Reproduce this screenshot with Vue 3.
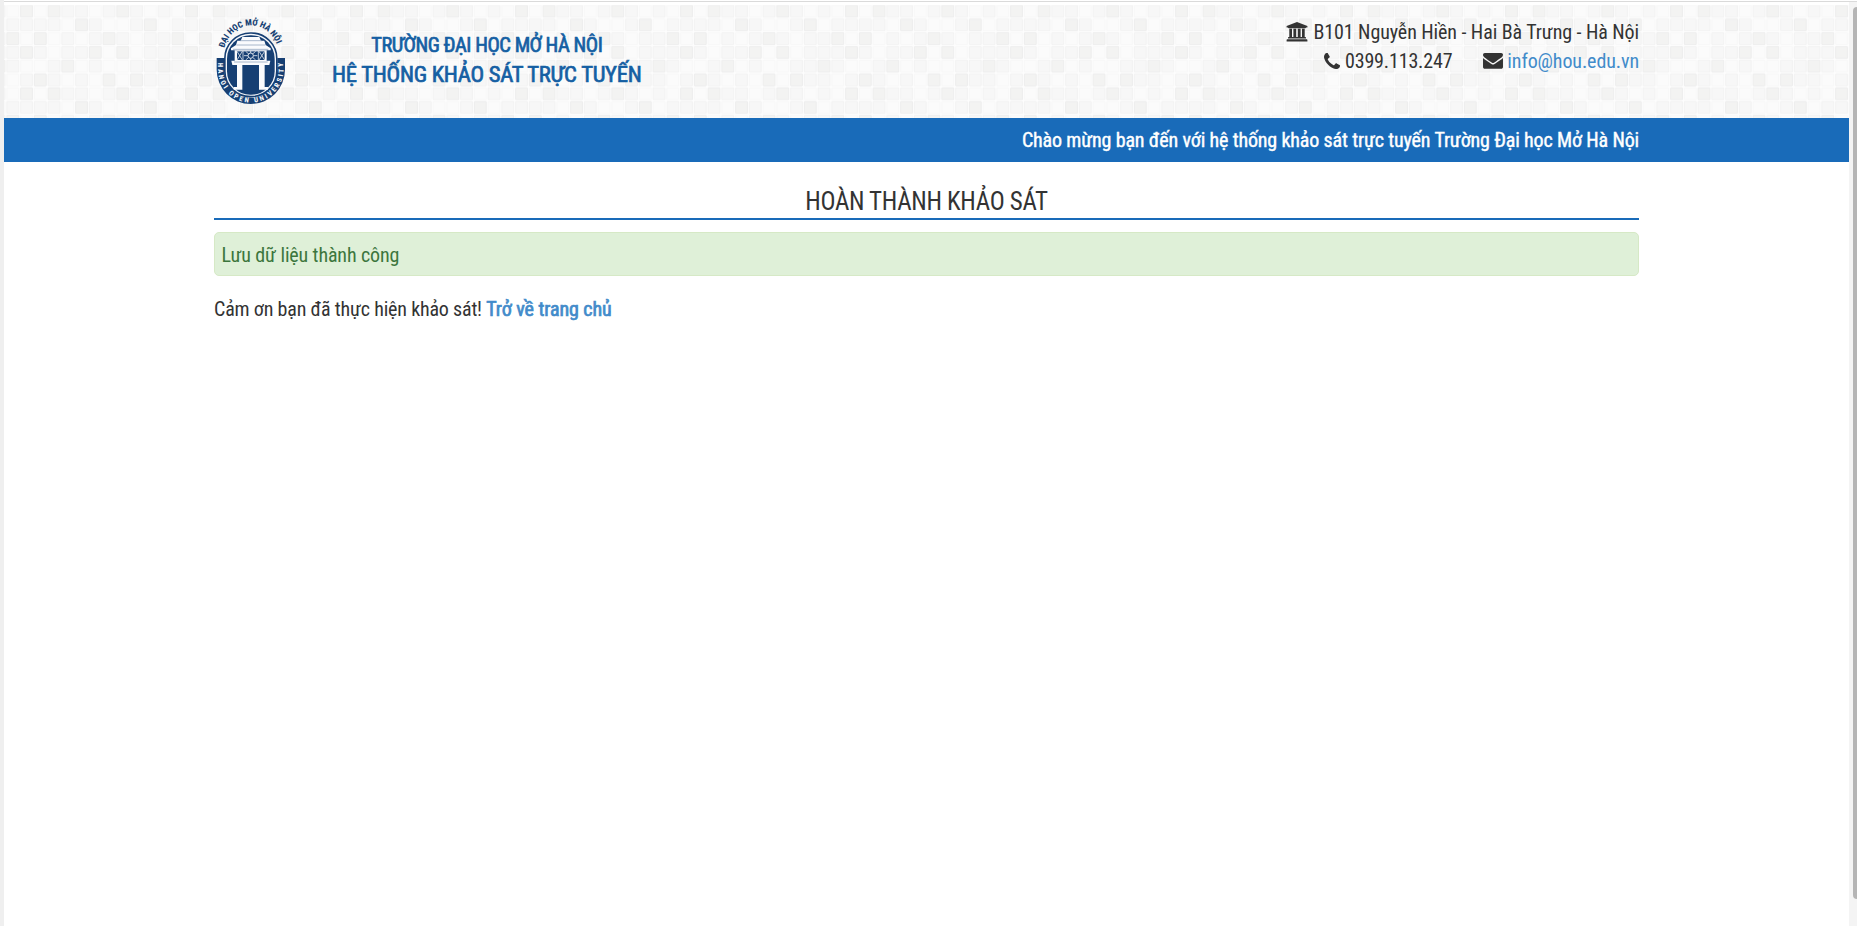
<script setup>
// Shade index of every tile in one repeat of the header mosaic
const rows = [
  [0, 2, 0, 2, 1, 1, 0, 1, 2, 1, 0, 1],
  [1, 1, 1, 1, 0, 2, 1, 0, 0, 1, 2, 0],
  [2, 0, 2, 0, 1, 0, 1, 2, 1, 0, 1, 1],
  [1, 2, 1, 0, 1, 1, 2, 0, 2, 0, 1, 1],
  [1, 0, 0, 1, 2, 0, 1, 0, 0, 1, 1, 2],
  [0, 1, 2, 1, 0, 1, 0, 2, 0, 2, 1, 1],
]
const tiles = rows.flatMap((row, r) =>
  row.map((shade, c) => ({ id: `${r}-${c}`, x: c * 13.75 + 0.9, y: r * 13.75 + 0.9, shade })),
)
</script>

<template>
  <div class="window">
    <div class="page">
      <header class="header">
        <svg class="mosaic" aria-hidden="true">
          <defs>
            <pattern id="mosaic" x="2" y="-0.6" width="165" height="82.5" patternUnits="userSpaceOnUse">
              <rect width="166" height="83" class="grout" />
              <rect
                v-for="t in tiles"
                :key="t.id"
                :x="t.x"
                :y="t.y"
                width="11.8"
                height="11.8"
                rx="0.6"
                :class="['tile', 'shade-' + t.shade]"
              />
            </pattern>
          </defs>
          <rect width="100%" height="100%" fill="url(#mosaic)" />
        </svg>
        <div class="container header-row">
          <svg class="logo" viewBox="27 0 216 315" role="img">
            <defs>
              <path id="arc-top" d="M58 120 A84 95 0 0 1 219 120" />
              <path id="arc-bottom" d="M39.500 150 V185 A98 99 0 0 0 235.500 185 V150" />
            </defs>
            <path class="navy" d="M35 150 H58 V185 A79.500 84 0 0 0 217 185 V150 H240 V185 A102.500 103 0 0 1 35 185 Z" />
            <rect x="59.500" y="75" width="156" height="191" rx="77" class="oval-rim" />
            <rect x="66" y="82" width="143" height="178" rx="70" class="navy" />
            <g class="gate">
              <path d="M112 87 H163 L168 98 H178 L182 111 L197 121 V127 H78 V121 L93 111 L97 98 H107 Z" />
              <path d="M89 127 H185 V160 H89 Z" />
              <path d="M79 158 H196 L193 171 H82 Z" />
              <path d="M96 169 H112 V245 H86 V237 H96 Z M162 169 H179 V237 H189 V245 H162 Z" />
            </g>
            <path class="navy-line" d="M94 111 H181 M84 124 H190 M105 98 H171 M87 162 H188" />
            <path class="navy" d="M96 130 H179 V156 H96 Z" />
            <path class="wheel-lines" d="M137 128V158 M117 143H157 M122 130L152 156 M152 130L122 156 M96 130L112 156 M112 130L96 156 M162 130L179 156 M179 130L162 156 M114 129V157 M160 129V157" />
            <circle cx="137" cy="143" r="8" class="hub" />
            <text class="arc-text top"><textPath href="#arc-top" textLength="214">ĐẠI HỌC MỞ HÀ NỘI</textPath></text>
            <text class="arc-text bottom"><textPath href="#arc-bottom" startOffset="14" textLength="350">HANOI OPEN UNIVERSITY</textPath></text>
          </svg>
          <div class="brand">
            <div class="school">TRƯỜNG ĐẠI HỌC MỞ HÀ NỘI</div>
            <div class="system">HỆ THỐNG KHẢO SÁT TRỰC TUYẾN</div>
          </div>
          <div class="contact">
            <div class="contact-line address">
              <svg class="icon bank" viewBox="0 0 22 20">
                <path d="M11 0 L21.4 4 V5.4 H20 Q20 6.2 19.2 6.2 H2.8 Q2 6.2 2 5.4 H.6 V4 Z M3.3 6.8 H6 V15 H7.4 V6.8 H10.2 V15 H11.8 V6.8 H14.6 V15 H16 V6.8 H18.7 V15 H19.3 Q20 15 20 15.8 V16.5 H2 V15.8 Q2 15 2.7 15 H3.3 Z M1.3 17.2 H20.7 Q21.4 17.2 21.4 18 V19.4 H.6 V18 Q.6 17.2 1.3 17.2 Z" />
              </svg>
              <span>B101 Nguyễn Hiền - Hai Bà Trưng - Hà Nội</span>
            </div>
            <div class="contact-line">
              <svg class="icon phone" viewBox="192 256 1408 1408">
                <path d="M1600 1240q0 27-10 70.5t-21 68.5q-21 50-122 106-94 51-186 51-27 0-53-3.5t-57.5-12.5-47-14.5-55.5-20.5-49-18q-98-35-175-83-127-79-264-216t-216-264q-48-77-83-175-3-9-18-49t-20.5-55.5-14.5-47-12.5-57.5-3.5-53q0-92 51-186 56-101 106-122 25-11 68.5-21t70.5-10q14 0 21 3 18 6 53 76 11 19 30 54t35 63.5 31 53.5q3 4 17.5 25t21.5 35.5 7 28.5q0 20-28.5 50t-62 55-62 53-28.5 46q0 9 5 22.5t8.5 20.5 14 24 11.5 19q76 137 174 235t235 174q2 1 19 11.5t24 14 20.5 8.5 22.5 5q18 0 46-28.5t53-62 55-62 50-28.5q14 0 28.5 7t35.5 21.5 25 17.5q25 15 53.5 31t63.5 35 54 30q70 35 76 53 3 7 3 21z" transform="translate(0 128)" />
              </svg>
              <span class="number">0399.113.247</span>
              <svg class="icon mail" viewBox="0 256 1792 1408">
                <path d="M1792 710v794q0 66-47 113t-113 47h-1472q-66 0-113-47t-47-113v-794q44 49 101 87 362 246 497 345 57 42 92.500 65.500t94.500 48 110 24.500h2q51 0 110-24.500t94.500-48 92.500-65.500q170-123 498-345 57-39 100-87zm0-294q0 79-49 151t-122 123q-376 261-468 325-10 7-42.500 31t-54 38.500-52 32.500-57.500 27-50 9h-2q-23 0-50-9t-57.500-27-52-32.500-54-38.500-42.500-31q-91-64-262-182.500t-205-142.500q-62-42-117-115.500t-55-136.500q0-78 41.500-130t118.500-52h1472q65 0 112.500 47t47.500 113z" />
              </svg>
              <a class="link">info@hou.edu.vn</a>
            </div>
          </div>
        </div>
      </header>
      <div class="welcome">
        <div class="container">Chào mừng bạn đến với hệ thống khảo sát trực tuyến Trường Đại học Mở Hà Nội</div>
      </div>
      <main class="container">
        <h1 class="title">HOÀN THÀNH KHẢO SÁT</h1>
        <div class="alert">Lưu dữ liệu thành công</div>
        <p class="thanks">Cảm ơn bạn đã thực hiện khảo sát! <a class="link strong">Trở về trang chủ</a></p>
      </main>
    </div>
    <div class="scrollbar"><div class="thumb"></div></div>
  </div>
</template>

<style>
body { overflow: hidden; background: #fff; }
</style>

<style scoped>
.window {
  box-sizing: border-box;
  display: flex;
  height: 926px;
  padding-top: 1px;
  border-left: 4px solid #efefef;
  font: 20px/28.57px "Roboto Condensed", Roboto, sans-serif;
  color: #333;
  background: linear-gradient(#dadada, #dadada) 0 1px / 100% 1px no-repeat border-box;
}
.page { flex: 1; padding-top: 4px; }
.container { width: 1425px; margin: 0 auto; }
.header { position: relative; height: 113px; }
.mosaic { position: absolute; inset: 0; width: 100%; height: 100%; }
.grout { fill: #fdfdfd; }
.tile { stroke-width: 1; }
.shade-0 { fill: #fbfbfb; stroke: #f8f8f8; }
.shade-1 { fill: #f7f7f7; stroke: #f3f3f3; }
.shade-2 { fill: #f3f3f2; stroke: #eeeeee; }
.header-row { position: relative; display: flex; align-items: flex-start; }
.logo { width: 72px; height: 105px; margin-top: 3px; }
.navy { fill: #163f73; }
.oval-rim { fill: #f5f7fa; stroke: #163f73; stroke-width: 5; }
.gate { fill: #fafbfd; }
.navy-line { stroke: #7f96b4; stroke-width: 2; fill: none; }
.wheel-lines { stroke: #dde4ed; stroke-width: 2.5; fill: none; }
.hub { fill: #163f73; stroke: #dde4ed; stroke-width: 3; }
.arc-text { font-family: "Roboto Condensed", sans-serif; font-weight: 800; }
.arc-text.top { font-size: 26px; fill: #163f73; }
.arc-text.bottom { font-size: 21px; fill: #f4f7fb; }
.brand {
  margin: 26px 0 0 46px;
  color: #155fa3;
  text-align: center;
  -webkit-text-stroke: 0.7px currentColor;
}
.school { font-size: 20.5px; letter-spacing: -0.47px; }
.system { font-size: 22.7px; line-height: 30px; letter-spacing: -0.28px; }
.contact { margin: 13px 0 0 auto; }
.contact-line { display: flex; justify-content: flex-end; align-items: flex-start; height: 28.57px; letter-spacing: -0.1px; }
.address { letter-spacing: -0.085px; }
.number { letter-spacing: -0.16px; }
.icon { fill: #333; flex: none; }
.bank { width: 22px; height: 20px; margin: 4px 5px 0 0; }
.phone { width: 16px; height: 16px; margin: 6px 4.5px 0 0; }
.mail { width: 20px; height: 15.7px; margin: 6.5px 4.5px 0 30.5px; }
.link { color: #428bca; }
.strong { letter-spacing: -0.07px; -webkit-text-stroke: 0.7px currentColor; }
.welcome {
  height: 44px;
  line-height: 44px;
  background: #196bb9;
  color: #fff;
  text-align: right;
  letter-spacing: -0.155px;
  -webkit-text-stroke: 0.4px currentColor;
}
.title {
  height: 31px;
  margin: 25px 0 12px;
  border-bottom: 2px solid #196bb9;
  font-size: 25px;
  font-weight: 400;
  line-height: 30px;
  letter-spacing: -0.32px;
  text-align: center;
}
.alert {
  box-sizing: border-box;
  height: 44px;
  margin-bottom: 19px;
  padding: 8px 6.5px;
  border: 1px solid #d6e9c6;
  border-radius: 5px;
  background: #dff0d8;
  color: #3c763d;
  letter-spacing: -0.13px;
}
.thanks { margin: 0; letter-spacing: -0.19px; }
.scrollbar { width: 8px; margin-top: 1px; background: #f4f4f4; }
.thumb { width: 4px; height: 892px; margin: 5px 0 0 4px; border-radius: 4px 0 0 4px; background: #b5b5b5; }
</style>
